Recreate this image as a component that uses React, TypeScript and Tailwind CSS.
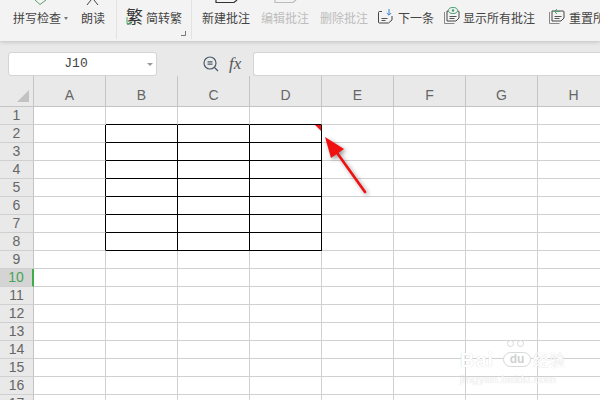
import React from 'react';

const columns = ['A', 'B', 'C', 'D', 'E', 'F', 'G', 'H'];
const rows = [1, 2, 3, 4, 5, 6, 7, 8, 9, 10, 11, 12, 13, 14, 15, 16, 17];

function CommentIcon({ children }: { children?: React.ReactNode }) {
  return (
    <svg width="17" height="17" viewBox="0 0 17 17" fill="none" className="shrink-0">
      <path d="M5 3.5H2.5a1 1 0 0 0-1 1v9.5a1 1 0 0 0 1 1h9l3.5-3V8" stroke="#444" strokeWidth="1" />
      <path d="M4.5 10.5h6M4.5 12.5h4" stroke="#555" strokeWidth="1" />
      {children}
    </svg>
  );
}

function StackIcon({ children }: { children?: React.ReactNode }) {
  return (
    <svg width="18" height="18" viewBox="0 0 18 18" fill="none" className="shrink-0">
      <path d="M1.5 5v11.5h10" stroke="#888" strokeWidth="1" />
      <path d="M4 4h11a1 1 0 0 1 1 1v6l-3 3H4z" stroke="#444" strokeWidth="1" fill="#f3f3f3" />
      <path d="M6.5 9.5h7M6.5 11.5h5" stroke="#555" strokeWidth="1" />
      {children}
    </svg>
  );
}

function Cell({ col, row }: { col: number; row: number }) {
  const inTable = col >= 1 && col <= 3 && row >= 2 && row <= 8;
  const aboveTable = col >= 1 && col <= 3 && row === 1;
  const leftOfTable = col === 0 && row >= 2 && row <= 8;
  return (
    <div
      className={`relative h-[18px] border-r border-b ${
        inTable ? 'border-r-black border-b-black' : 'border-r-[#d0d0d0] border-b-[#d0d0d0]'
      } ${aboveTable ? 'border-b-black' : ''} ${leftOfTable ? 'border-r-black' : ''}`}
    >
      {col === 3 && row === 2 && (
        <div className="absolute top-0 right-0 w-0 h-0 border-t-[6px] border-l-[6px] border-t-[#f01818] border-l-transparent" />
      )}
    </div>
  );
}

export default function App() {
  return (
    <div className="relative w-[600px] h-[400px] overflow-hidden bg-white text-[#444] font-['Noto_Sans_CJK_SC',sans-serif]">
      {/* ribbon */}
      <div className="relative z-10 h-[41px] bg-[#f3f3f3] shadow-[0_1px_4px_rgba(0,0,0,0.18)] flex text-[12px] leading-[16px] whitespace-nowrap">
        <div className="relative shrink-0 w-[117px] border-r border-[#e2e2e2] mb-[2px] pl-[13px] pt-[10px] flex">
          <svg width="14" height="5" viewBox="0 0 14 5" fill="none" className="absolute top-0 left-[34px]">
            <path d="M1 0l5 4.5L12 0" stroke="#5aa06a" strokeWidth="1" />
          </svg>
          <svg width="14" height="5" viewBox="0 0 14 5" fill="none" className="absolute top-0 left-[86px]">
            <path d="M1 5l4-5M12 5L8 0" stroke="#444" strokeWidth="1" />
          </svg>
          <span>拼写检查</span>
          <span className="ml-[3px] mt-[7px] w-0 h-0 border-x-[2.5px] border-t-[3px] border-x-transparent border-t-[#777]" />
          <span className="ml-[13px]">朗读</span>
        </div>
        <div className="relative shrink-0 w-[75px] border-r border-[#e2e2e2] mb-[2px] pl-[9px] pt-[7px] flex items-start">
          <span className="relative shrink-0 w-[17px] text-[17px] leading-[18px] text-[#333]">
            繁
            <svg width="6" height="8" viewBox="0 0 6 8" fill="none" className="absolute left-0 top-[10px]">
              <path d="M1 0v6.5h4M3.5 5L5 6.5 3.5 8" stroke="#4f9e63" strokeWidth="1" />
            </svg>
          </span>
          <span className="ml-[3px] mt-[3px]">简转繁</span>
          <svg width="5" height="5" viewBox="0 0 5 5" className="absolute right-[5px] bottom-[3px]">
            <path d="M4.5 0v4.5H0" stroke="#777" fill="none" />
          </svg>
        </div>
        <div className="relative shrink-0 flex pl-[10px] pt-[10px] gap-[11px]">
          <svg width="24" height="4" viewBox="0 0 24 4" fill="none" className="absolute top-0 left-[23px]">
            <path d="M1 0v2.5h18L22 0" stroke="#333" strokeWidth="1.2" />
          </svg>
          <svg width="24" height="4" viewBox="0 0 24 4" fill="none" className="absolute top-0 left-[82px]">
            <path d="M1 0v2.5h18L22 0" stroke="#bbb" strokeWidth="1.2" />
          </svg>
          <span>新建批注</span>
          <span className="text-[#bdbdbd]">编辑批注</span>
          <span className="text-[#bdbdbd]">删除批注</span>
        </div>
        <div className="shrink-0 flex items-start pl-[9px] pt-[8px]">
          <CommentIcon>
            <path d="M12 1v6M9.8 5l2.2 2.2L14.2 5" stroke="#3b82d6" strokeWidth="1" />
          </CommentIcon>
          <span className="ml-[4px] mt-[2px]">下一条</span>
        </div>
        <div className="shrink-0 flex items-start pl-[9px] pt-[7px]">
          <StackIcon>
            <ellipse cx="10" cy="3.5" rx="4.5" ry="3" stroke="#4f9e72" fill="#f3f3f3" />
            <circle cx="10" cy="3.5" r="1.3" fill="#4f9e72" />
          </StackIcon>
          <span className="ml-[2px] mt-[3px]">显示所有批注</span>
        </div>
        <div className="shrink-0 flex items-start pl-[13px] pt-[7px]">
          <StackIcon>
            <path d="M7 4.5h5M9 2L6.5 4.5 9 7" stroke="#4f9e72" fill="none" />
          </StackIcon>
          <span className="ml-[3px] mt-[3px]">重置所有批注</span>
        </div>
      </div>

      {/* formula bar */}
      <div className="h-[35px] bg-[#e9e9e9] flex items-end">
        <div className="ml-[8px] shrink-0 w-[149px] h-[24px] bg-white rounded-[3px] border border-[#d4d4d4] flex items-center">
          <span className="flex-1 text-center pr-[4px] text-[13px] text-[#444] font-['Liberation_Mono',monospace]">J10</span>
          <span className="mr-[3px] w-0 h-0 border-x-[3px] border-t-[3px] border-x-transparent border-t-[#999]" />
        </div>
        <div className="ml-[45px] mb-[1px] shrink-0 flex items-center h-[22px]">
          <svg width="18" height="18" viewBox="0 0 18 18" fill="none">
            <circle cx="8" cy="8" r="6" stroke="#4a5a6a" strokeWidth="1.2" />
            <path d="M5.5 6.8h5M5.5 9.2h5M12.5 12.5l3.5 3.5" stroke="#4a5a6a" strokeWidth="1.2" />
          </svg>
          <span className="ml-[9px] text-[17px] italic text-[#555] font-['Liberation_Serif',serif]">fx</span>
        </div>
        <div className="ml-[12px] flex-1 h-[24px] bg-white rounded-l-[3px] border border-r-0 border-[#d4d4d4]" />
      </div>

      {/* sheet */}
      <div className="grid grid-cols-[34px_repeat(8,72px)] font-['Liberation_Sans',sans-serif]">
        <div className="relative h-[31px] bg-[#e9e9e9] border-r border-b border-[#c4c4c4]">
          <div className="absolute right-[4px] bottom-[4px] w-0 h-0 border-l-[12px] border-b-[12px] border-l-transparent border-b-[#c2c2c2]" />
        </div>
        {columns.map((c) => (
          <div
            key={c}
            className="h-[31px] bg-[#e9e9e9] border-r border-b border-[#c4c4c4] flex items-end justify-center pb-[2px] text-[14px] leading-[18px] text-[#666]"
          >
            {c}
          </div>
        ))}
        {rows.map((r) => (
          <React.Fragment key={r}>
            <div
              className={`h-[18px] border-r border-b border-b-[#d0d0d0] flex items-center justify-center text-[14px] ${
                r === 10
                  ? 'bg-[#d4d4d4] border-r-[2px] border-r-[#3fae49] text-[#4aa356]'
                  : 'bg-[#e9e9e9] border-r-[#c4c4c4] text-[#666]'
              }`}
            >
              {r}
            </div>
            {columns.map((_, i) => (
              <Cell key={i} col={i} row={r} />
            ))}
          </React.Fragment>
        ))}
      </div>

      {/* annotation arrow */}
      <svg
        width="60"
        height="76"
        viewBox="0 0 60 76"
        fill="none"
        className="absolute left-[320px] top-[130px] drop-shadow-[2px_2px_2px_rgba(0,0,0,0.4)]"
      >
        <path d="M45 62L15 20" stroke="#f01010" strokeWidth="2.6" strokeLinecap="round" />
        <path d="M5 7L24 19L11 28Z" fill="#f01010" />
      </svg>

      {/* watermark */}
      <div className="absolute left-[460px] top-[340px] w-[110px] h-[46px] text-white select-none pointer-events-none font-['Liberation_Sans',sans-serif] [text-shadow:0_0_1px_#c8c8c8]">
        <span className="absolute left-0 top-[10px] text-[20px] leading-[20px] font-bold tracking-[1px]">Bai</span>
        <span className="absolute left-[47px] top-[0px] w-[7px] h-[7px] rounded-full bg-white border border-[#d8d8d8]" />
        <span className="absolute left-[57px] top-[0px] w-[7px] h-[7px] rounded-full bg-white border border-[#d8d8d8]" />
        <span className="absolute left-[43px] top-[12px] w-[28px] h-[15px] rounded-full bg-white border border-[#d8d8d8] text-[#d0d0d0] [text-shadow:none] text-[12px] leading-[13px] font-bold text-center">du</span>
        <span className="absolute left-[73px] top-[10px] text-[16px] leading-[18px] font-['Noto_Sans_CJK_SC',sans-serif]">经验</span>
        <span className="absolute left-0 top-[32px] text-[11.5px] leading-[14px] tracking-[0.2px]">jingyan.baidu.com</span>
      </div>
    </div>
  );
}
